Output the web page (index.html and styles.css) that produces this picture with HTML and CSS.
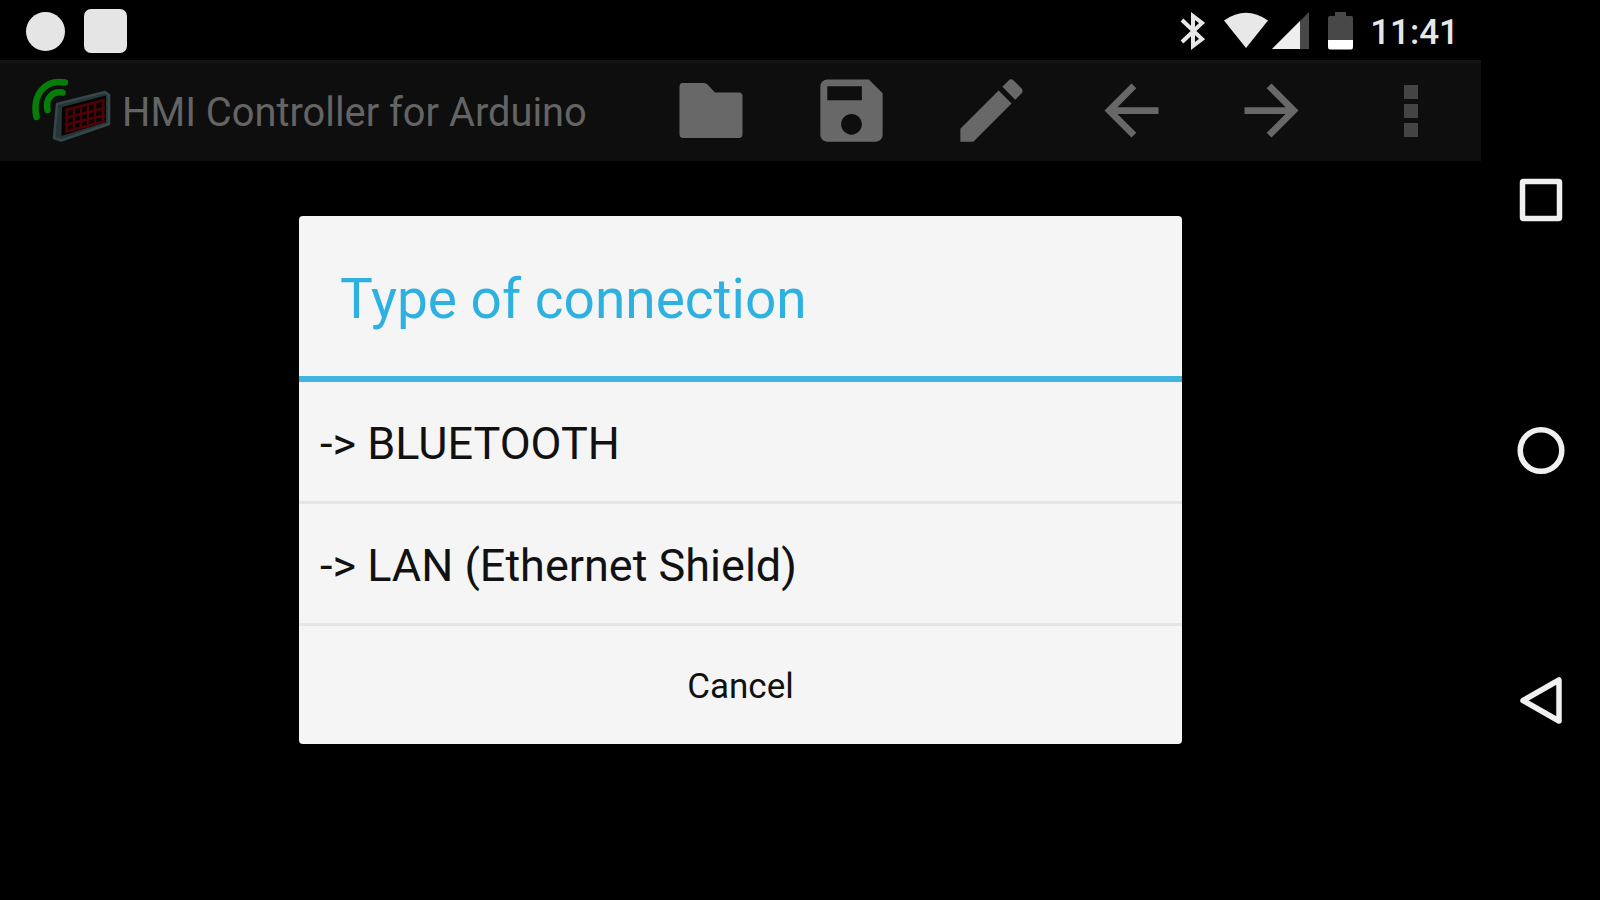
FILE: index.html
```html
<!DOCTYPE html>
<html lang="en">
<head>
    <meta charset="UTF-8">
    <meta name="viewport" content="width=device-width, initial-scale=1.0">
    <title>HMI Controller for Arduino</title>
    <link rel="stylesheet" href="styles.css">
</head>
<body>
    <div class="screen">
        <div class="app">
            <div class="status-bar">
                <div class="notifications">
                    <div class="dot"></div>
                    <div class="square"></div>
                </div>
                <div class="system-icons">
                    <svg class="bluetooth" width="26" height="40" viewBox="0 0 26 40">
                        <path d="M2 9 L22 28 L13 35 V5 L22 12 L2 31" fill="none" stroke="#e8e8e8" stroke-width="4"/>
                    </svg>
                    <svg class="wifi" width="46" height="38" viewBox="0 0 46 38">
                        <path d="M1 8.5 Q23 -7 45 8.5 L23 36 Z" fill="#e8e8e8"/>
                    </svg>
                    <svg class="signal" width="37" height="38" viewBox="0 0 37 38">
                        <path d="M37 0 V37 H0 Z" fill="#484848"/>
                        <path d="M28 9 V37 H0 Z" fill="#eee"/>
                    </svg>
                    <svg class="battery" width="25" height="38" viewBox="0 0 25 38">
                        <path d="M7 0 H18 V4 H23 Q25 4 25 6 V28 H0 V6 Q0 4 2 4 H7 Z" fill="#484848"/>
                        <path d="M0 28 H25 V35 Q25 37.5 23 37.5 H2 Q0 37.5 0 35 Z" fill="#fff"/>
                    </svg>
                    <span class="clock">11:41</span>
                </div>
            </div>

            <div class="action-bar">
                <svg class="logo" width="84" height="72" viewBox="30 75 84 72">
                    <g fill="none" stroke="#067d06" stroke-width="6.5" stroke-linecap="round">
                        <path d="M36.500 116 C32 95 44 78 65 81.500"/>
                        <path d="M47.500 109 C45 98 52 90 62.500 91.500"/>
                    </g>
                    <path d="M57 103 L105 91 L109 94 V123 L61 139.500 L54 137 Z" fill="#263638" stroke="#34474a" stroke-width="2.5" stroke-linejoin="round"/>
                    <path d="M62 106 L106 94.500 V121 L61.500 135 Z" fill="#080303"/>
                    <g fill="none" stroke="#4c0306" stroke-width="2.5">
                        <path d="M65 109 L105 99 M65 117 L105 107 M65 124 L105 114 M65 131 L105 120"/>
                        <path d="M67 108 V131 M74 106.500 V129 M81 105 V127 M88 103 V125 M95 101 V123 M103 99.500 V121"/>
                    </g>
                </svg>
                <h1 class="app-title">HMI Controller for Arduino</h1>
                <div class="actions">
                    <div class="action">
                        <svg width="84" height="84" viewBox="0 0 84 84">
                            <path d="M13.500 14 H35 Q37 14 38.500 15.500 L46 23.500 H70 Q73.500 23.500 73.500 27 V65 Q73.500 69 70 69 H14 Q10.500 69 10.500 65 V18 Q10.500 14 13.500 14 Z" fill="#686868"/>
                        </svg>
                    </div>
                    <div class="action">
                        <svg width="83" height="83" viewBox="0 0 24 24">
                            <path d="M17 3H5c-1.110 0-2 .9-2 2v14c0 1.100.890 2 2 2h14c1.100 0 2-.9 2-2V7l-4-4zm-5 16c-1.660 0-3-1.340-3-3s1.340-3 3-3 3 1.340 3 3-1.340 3-3 3zm3-10H5V5h10v4z" fill="#686868"/>
                        </svg>
                    </div>
                    <div class="action">
                        <svg width="83" height="83" viewBox="0 0 24 24">
                            <path d="M3 17.250V21h3.750L17.810 9.940l-3.750-3.750L3 17.250zM20.710 7.040c.390-.390.390-1.020 0-1.410l-2.340-2.340c-.390-.390-1.020-.390-1.410 0l-1.830 1.830 3.750 3.750 1.830-1.830z" fill="#686868"/>
                        </svg>
                    </div>
                    <div class="action">
                        <svg width="81" height="81" viewBox="0 0 24 24">
                            <path d="M20 11H7.830l5.590-5.590L12 4l-8 8 8 8 1.410-1.410L7.830 13H20v-2z" fill="#686868"/>
                        </svg>
                    </div>
                    <div class="action">
                        <svg width="81" height="81" viewBox="0 0 24 24">
                            <path d="M12 4l-1.410 1.410L16.170 11H4v2h12.170l-5.580 5.590L12 20l8-8z" fill="#686868"/>
                        </svg>
                    </div>
                    <div class="action overflow">
                        <i></i>
                        <i></i>
                        <i></i>
                    </div>
                </div>
            </div>

            <div class="content">
                <div class="dialog">
                    <h2 class="dialog-title">Type of connection</h2>
                    <div class="option">-&gt; BLUETOOTH</div>
                    <div class="option">-&gt; LAN (Ethernet Shield)</div>
                    <div class="cancel">Cancel</div>
                </div>
            </div>
        </div>

        <div class="nav-bar">
            <div class="nav-item">
                <svg width="50" height="50" viewBox="0 0 50 50">
                    <rect x="6.500" y="6.500" width="37" height="37" rx="1"/>
                </svg>
            </div>
            <div class="nav-item">
                <svg width="50" height="50" viewBox="0 0 50 50">
                    <circle cx="25" cy="25.500" r="20.800"/>
                </svg>
            </div>
            <div class="nav-item">
                <svg width="50" height="50" viewBox="0 0 50 50">
                    <path d="M7 25.500 L43 5 V46 Z"/>
                </svg>
            </div>
        </div>
    </div>
</body>
</html>
```

FILE: styles.css
```css
body {
    font-family: Roboto, "Liberation Sans", sans-serif;
    margin: 0;
    background: #000;
}

.screen {
    display: flex;
    width: 1600px;
    height: 900px;
    overflow: hidden;
    background: #000;
}

.app {
    display: flex;
    flex-direction: column;
    width: 1481px;
}

/* status bar */
.status-bar {
    display: flex;
    justify-content: space-between;
    height: 60px;
    box-sizing: border-box;
    padding: 2px 22px 0 26px;
}

.notifications,
.system-icons {
    display: flex;
    align-items: center;
}

.notifications {
    gap: 19px;
}

.dot {
    width: 39px;
    height: 39px;
    border-radius: 50%;
    background: #e5e5e5;
}

.square {
    width: 43px;
    height: 44px;
    border-radius: 7px;
    background: #e5e5e5;
}

.wifi {
    margin-left: 17px;
}

.signal {
    margin-left: 3px;
}

.battery {
    margin-left: 19px;
}

.clock {
    margin-left: 17px;
    padding-top: 4px;
    color: #e6e6e6;
    font-size: 35px;
    font-weight: 500;
    line-height: 54px;
}

/* action bar */
.action-bar {
    display: flex;
    align-items: center;
    height: 101px;
    box-sizing: border-box;
    padding-left: 30px;
    border-top: 3px solid #141414;
    background: #0e0e0e;
}

.app-title {
    margin: 0 0 0 8px;
    color: #646464;
    font-size: 39.8px;
    font-weight: 400;
    white-space: nowrap;
}

.actions {
    display: flex;
    margin-left: auto;
    padding-bottom: 3px;
}

.action {
    display: flex;
    align-items: center;
    justify-content: center;
    width: 140px;
    height: 84px;
}

.overflow {
    flex-direction: column;
    gap: 5px;
}

.overflow i {
    width: 14px;
    height: 14px;
    background: #444;
}

/* connection dialog */
.content {
    padding: 55px 0 0 299px;
}

.dialog {
    width: 883px;
    height: 528px;
    border-radius: 4px;
    overflow: hidden;
    background: #f5f5f5;
    color: #111;
}

.dialog-title {
    height: 166px;
    box-sizing: border-box;
    margin: 0;
    padding: 6px 0 0 41px;
    border-bottom: 6px solid #42b4e0;
    color: #2cb1e1;
    font-size: 55px;
    font-weight: 400;
    line-height: 154px;
}

.option {
    height: 122px;
    box-sizing: border-box;
    padding: 4px 0 0 21px;
    border-bottom: 3px solid #e5e5e5;
    font-size: 45px;
    line-height: 116px;
}

.cancel {
    font-size: 35px;
    line-height: 121px;
    text-align: center;
}

/* navigation bar */
.nav-bar {
    display: flex;
    flex-direction: column;
    width: 119px;
    padding-top: 75px;
}

.nav-item {
    display: flex;
    align-items: center;
    justify-content: center;
    height: 250px;
}

.nav-item svg {
    fill: none;
    stroke: #f0f0f0;
    stroke-width: 5.5;
    stroke-linejoin: round;
}
```
